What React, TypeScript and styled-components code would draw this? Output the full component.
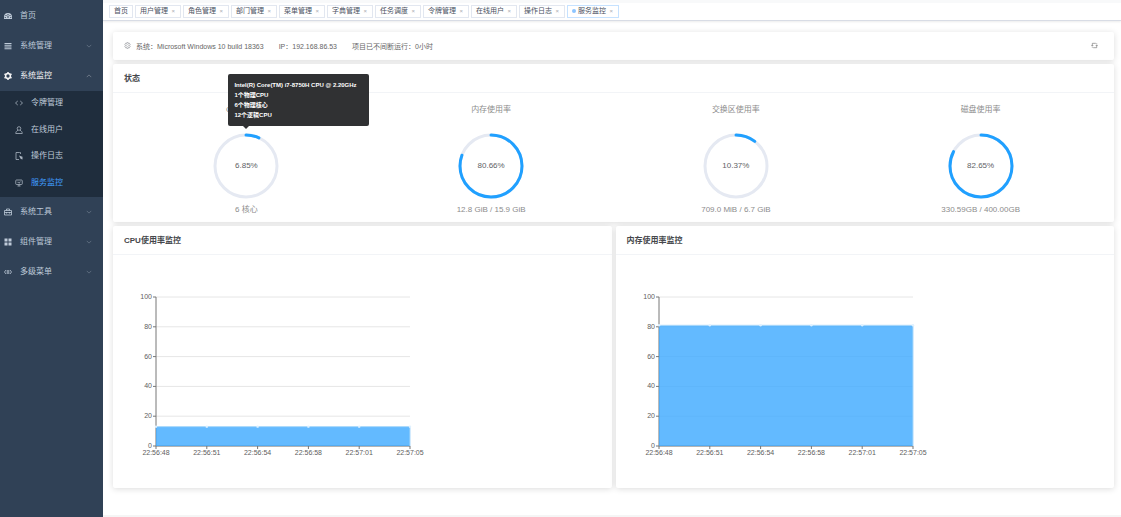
import React from 'react';
import styled, { createGlobalStyle, css } from 'styled-components';

const GlobalStyle = createGlobalStyle`
  *, *::before, *::after { box-sizing: border-box; }
  body {
    margin: 0;
    background: #fff;
    color: #303133;
    font-family: "Liberation Sans", "Noto Sans CJK SC", sans-serif;
    font-size: 7px;
  }
`;

const Layout = styled.div`
  display: flex;
  min-height: 100vh;
`;

/* ---------- Sidebar ---------- */

const Sidebar = styled.nav`
  flex: 0 0 103px;
  padding-top: 1px;
  background: #304156;
`;

const MenuLink = styled.a<{ $open?: boolean }>`
  display: flex;
  align-items: center;
  height: 30px;
  padding: 0 11px 0 4px;
  color: ${(p) => (p.$open ? '#f4f4f5' : '#bfcbd9')};
  font-size: 8px;
  line-height: 12px;
  text-decoration: none;

  span { flex: 1; margin-left: 8px; padding-bottom: 1px; }
`;

const SubMenu = styled.div`
  display: flex;
  flex-direction: column;
  min-height: 106px;
  background: #1f2d3d;
`;

const SubLink = styled.a<{ $active?: boolean }>`
  display: flex;
  flex: 1;
  align-items: center;
  gap: 8px;
  padding: 0 0 2px 15px;
  color: ${(p) => (p.$active ? '#409eff' : '#bfcbd9')};
  font-size: 8px;
  line-height: 12px;
  text-decoration: none;

  svg { color: #aab4c0; }
`;

const Icon = styled.svg.attrs({ viewBox: '0 0 16 16', 'aria-hidden': true })<{ $size?: number }>`
  flex: none;
  width: ${(p) => p.$size ?? 8}px;
  height: ${(p) => p.$size ?? 8}px;
  fill: none;
  stroke: currentColor;
  stroke-width: 1.6;
`;

const icons: Record<string, React.ReactNode> = {
  dashboard: (
    <path
      fill="currentColor"
      stroke="none"
      fillRule="evenodd"
      d="M8 2a8 8 0 0 0-8 8v4h16v-4a8 8 0 0 0-8-8zM7 4h2v2H7zM3 6h2v2H3zM11 6h2v2h-2zM1.500 10h2v2h-2zM12.500 10h2v2h-2zM7.300 7h1.400l.6 4.500H6.700z"
    />
  ),
  list: <path d="M1 3h14M1 6.500h14M1 10h14M1 13.500h14" strokeWidth="2" />,
  gear: (
    <>
      <circle cx="8" cy="8" r="4.800" strokeWidth="3" />
      <path d="M8 0v3M8 13v3M1 4l2.500 1.500M12.500 10.500L15 12M1 12l2.500-1.500M12.500 5.500L15 4" strokeWidth="3" />
    </>
  ),
  gearLine: (
    <>
      <path d="M6.300 1.500h3.400l.6 2 2-.6 1.800 3L12.700 8l1.400 2.100-1.800 3-2-.6-.6 2H6.300l-.6-2-2 .6-1.800-3L3.300 8 1.900 5.900l1.800-3 2 .6z" />
      <circle cx="8" cy="8" r="2.400" strokeWidth="1" />
    </>
  ),
  code: <path d="M5.500 4L1 8l4.500 4M10.500 4L15 8l-4.500 4" />,
  user: (
    <>
      <circle cx="8" cy="5" r="3.600" />
      <path d="M6 8.500C3 10 1.500 12 1.500 15h13c0-3-1.500-5-4.500-6.500" />
    </>
  ),
  log: (
    <>
      <path d="M9 1H2v14h6M9 1h2v3" />
      <path d="M8 7l7 2.500v5.500l-3-1-1.500-1.500z" fill="currentColor" stroke="none" />
    </>
  ),
  monitor: (
    <>
      <rect x="1.500" y="2" width="13" height="9" rx="1.500" />
      <path d="M5 14h6M8 11v3M5 6.500h2l1.500 2L10.500 5" />
    </>
  ),
  toolbox: <path d="M1 5h14v9H1zM5 5V2h6v3M1 9h14M5 8v3M11 8v3" />,
  grid: (
    <path fill="currentColor" stroke="none" d="M1 1h6v6H1zM9 1h6v6H9zM1 9h6v6H1zM9 9h6v6H9z" />
  ),
  nested: <path d="M4 4L1 8l3 4M12 4l3 4-3 4M6.500 4v8M9.500 4v8" />,
  down: <path d="M2 5l6 6 6-6" />,
  up: <path d="M2 11l6-6 6 6" />,
  refresh: <path d="M3 9V3h8M13 7v6H5M13 3v2M3 13v-2M1 7l2 2.500L5 7M11 9l2-2.500L15 9" />,
};

const mainTop = [
  { icon: 'dashboard', label: '首页' },
  { icon: 'list', label: '系统管理', arrow: 'down' },
  { icon: 'gear', label: '系统监控', arrow: 'up' },
];
const subItems = [
  { icon: 'code', label: '令牌管理' },
  { icon: 'user', label: '在线用户' },
  { icon: 'log', label: '操作日志' },
  { icon: 'monitor', label: '服务监控' },
];
const mainBottom = [
  { icon: 'toolbox', label: '系统工具', arrow: 'down' },
  { icon: 'grid', label: '组件管理', arrow: 'down' },
  { icon: 'nested', label: '多级菜单', arrow: 'down' },
];

const Faint = styled.i`
  display: flex;
  opacity: 0.5;
`;

function MenuRow({ icon, label, arrow }: { icon: string; label: string; arrow?: string }) {
  return (
    <MenuLink href="#" $open={arrow === 'up'}>
      <Icon>{icons[icon]}</Icon>
      <span>{label}</span>
      {arrow && (
        <Faint>
          <Icon $size={6}>{icons[arrow]}</Icon>
        </Faint>
      )}
    </MenuLink>
  );
}

/* ---------- Tabs ---------- */

const Main = styled.main`
  flex: 1;
  min-width: 0;
  border-bottom: 2px solid #f5f5f5;
`;

const TabBar = styled.div`
  display: flex;
  gap: 2px;
  height: 21px;
  padding: 2px 6px 0;
  border-top: 3px solid #f8f9fa;
  border-bottom: 1px solid #d8dce5;
  box-shadow: 0 1px 2px rgba(0, 0, 0, 0.08);
`;

const Tab = styled.div<{ $active?: boolean }>`
  display: flex;
  align-items: center;
  height: 13px;
  padding: 0 4px 2px;
  border: 1px solid ${(p) => (p.$active ? '#c6e2ff' : '#e2e7f0')};
  line-height: 9px;
  white-space: nowrap;

  ${(p) =>
    p.$active &&
    css`
      &::before {
        content: '';
        width: 4px;
        height: 4px;
        margin-right: 2px;
        border-radius: 50%;
        background: #8cc5ff;
      }
    `}
`;

const TabLink = styled.a`
  color: #495060;
  font-size: 7px;
  text-decoration: none;
`;

const CloseButton = styled.button`
  width: 8px;
  padding: 0 1px 0 0;
  border: 0;
  background: none;
  color: #a8abb2;
  font-size: 6px;
  line-height: 8px;
  text-align: right;
`;

const tabs = ['首页', '用户管理', '角色管理', '部门管理', '菜单管理', '字典管理', '任务调度', '令牌管理', '在线用户', '操作日志', '服务监控'];

/* ---------- Cards ---------- */

const Content = styled.div`
  display: flex;
  flex-direction: column;
  gap: 4px;
  padding: 11px 7px 27px 10px;
`;

const Card = styled.section`
  border-radius: 2px;
  background: #fff;
  box-shadow: 0 1px 6px rgba(0, 0, 0, 0.14);
`;

const InfoBar = styled(Card)`
  display: flex;
  align-items: center;
  gap: 15px;
  height: 28px;
  padding: 0 16px 1px 11px;
  color: #666;
`;

const System = styled.span`
  display: flex;
  align-items: center;
  gap: 5px;

  svg { color: #909399; }
`;

const RefreshButton = styled.button`
  display: flex;
  margin-left: auto;
  padding: 0;
  border: 0;
  background: none;
  color: #808080;
`;

const CardTitle = styled.h2`
  margin: 0;
  padding: 2px 11px 0;
  border-bottom: 1px solid #f2f4f7;
  color: #45474b;
  font-size: 8px;
  font-weight: 700;
  line-height: 26px;
`;

const Gauges = styled.div`
  display: grid;
  grid-template-columns: repeat(4, 1fr);
  padding: 11px 11px 6px;
`;

const Gauge = styled.div`
  position: relative;
  display: flex;
  flex-direction: column;
  align-items: center;
  color: #8c8c8c;
  font-size: 8px;
  line-height: 12px;
`;

const Ring = styled.div`
  display: grid;
  margin: 17px 0 5px;
  place-items: center;

  > * { grid-area: 1 / 1; }
`;

const Percent = styled.span`
  color: #606266;
`;

const Tooltip = styled.div`
  position: absolute;
  bottom: 90px;
  left: 50%;
  width: 141px;
  margin-left: -18px;
  padding: 6px;
  border-radius: 2px;
  background: #303133;
  color: #fff;
  font-size: 6px;
  font-weight: 700;
  line-height: 10px;
  white-space: nowrap;

  &::after {
    content: '';
    position: absolute;
    top: 100%;
    left: 15px;
    border: 3px solid transparent;
    border-top-color: #303133;
    border-bottom: 0;
  }
`;

const gauges = [
  { title: 'CPU使用率', value: 6.85, text: '6.85%', note: '6 核心', tip: ['Intel(R) Core(TM) i7-8750H CPU @ 2.20GHz', '1个物理CPU', '6个物理核心', '12个逻辑CPU'] },
  { title: '内存使用率', value: 80.66, text: '80.66%', note: '12.8 GiB / 15.9 GiB' },
  { title: '交换区使用率', value: 10.37, text: '10.37%', note: '709.0 MiB / 6.7 GiB' },
  { title: '磁盘使用率', value: 82.65, text: '82.65%', note: '330.59GB / 400.00GB' },
];

function RingChart({ value }: { value: number }) {
  return (
    <svg width="66" height="66" viewBox="0 0 66 66" fill="none" strokeWidth="3">
      <circle cx="33" cy="33" r="31" stroke="#e5e9f2" />
      <circle
        cx="33"
        cy="33"
        r="31"
        stroke="#20a0ff"
        strokeLinecap="round"
        pathLength="100"
        strokeDasharray={`${value} 100`}
        transform="rotate(-90 33 33)"
      />
    </svg>
  );
}

const Charts = styled.div`
  display: grid;
  grid-template-columns: 1fr 1fr;
  gap: 4px;
`;

const ChartBody = styled.div`
  padding: 27px 11px 17px;

  svg { display: block; overflow: visible; }
  text { fill: #606060; font-size: 7px; }
`;

const times = ['22:56:48', '22:56:51', '22:56:54', '22:56:58', '22:57:01', '22:57:05'];

function AreaChart({ value }: { value: number }) {
  const left = 32;
  const right = 286;
  const base = 164;
  const height = 149;
  const step = (right - left) / 5;
  const y = (v: number) => base - (v / 100) * height;
  return (
    <svg width="320" height="189" viewBox="0 0 320 189">
      {[0, 20, 40, 60, 80, 100].map((v) => (
        <g key={v}>
          <path d={`M${left} ${y(v)}H${right}`} stroke="#e6e6e6" />
          <path d={`M${left - 3} ${y(v)}h3`} stroke="#777" />
          <text x={left - 4} y={y(v) + 2} textAnchor="end">{v}</text>
        </g>
      ))}
      <path d={`M${left} ${y(100)}V${base}H${right}`} fill="none" stroke="#777" />
      <rect x={left} y={y(value)} width={right - left} height={base - y(value)} fill="#3ca9ff" fillOpacity="0.8" />
      <path d={`M${left} ${y(value)}H${right}V${base}`} fill="none" stroke="#a9d8fb" />
      {times.map((t, i) => (
        <g key={t}>
          <path d={`M${left + step * i} ${base}v3`} stroke="#777" />
          <circle cx={left + step * i} cy={y(value)} r="1.200" fill="#dff1ff" />
          <text x={left + step * i} y={base + 9} textAnchor="middle">{t}</text>
        </g>
      ))}
    </svg>
  );
}

export default function App() {
  return (
    <>
      <GlobalStyle />
      <Layout>
        <Sidebar>
          {mainTop.map((m) => <MenuRow key={m.label} {...m} />)}
          <SubMenu>
            {subItems.map((s) => (
              <SubLink key={s.label} href="#" $active={s.icon === 'monitor'}>
                <Icon>{icons[s.icon]}</Icon>
                {s.label}
              </SubLink>
            ))}
          </SubMenu>
          {mainBottom.map((m) => <MenuRow key={m.label} {...m} />)}
        </Sidebar>
        <Main>
          <TabBar>
            {tabs.map((t, i) => (
              <Tab key={t} $active={i === tabs.length - 1}>
                <TabLink href="#">{t}</TabLink>
                {i > 0 && <CloseButton aria-label={`关闭${t}`}>×</CloseButton>}
              </Tab>
            ))}
          </TabBar>
          <Content>
            <InfoBar>
              <System>
                <Icon $size={7}>{icons.gearLine}</Icon>
                系统：Microsoft Windows 10 build 18363
              </System>
              <span>IP：192.168.86.53</span>
              <span>项目已不间断运行：0小时</span>
              <RefreshButton aria-label="刷新">
                <Icon $size={7}>{icons.refresh}</Icon>
              </RefreshButton>
            </InfoBar>
            <Card>
              <CardTitle>状态</CardTitle>
              <Gauges>
                {gauges.map((g) => (
                  <Gauge key={g.title}>
                    <span>{g.title}</span>
                    <Ring>
                      <RingChart value={g.value} />
                      <Percent>{g.text}</Percent>
                    </Ring>
                    <span>{g.note}</span>
                    {g.tip && (
                      <Tooltip role="tooltip">
                        {g.tip.map((line) => <div key={line}>{line}</div>)}
                      </Tooltip>
                    )}
                  </Gauge>
                ))}
              </Gauges>
            </Card>
            <Charts>
              <Card>
                <CardTitle>CPU使用率监控</CardTitle>
                <ChartBody><AreaChart value={13} /></ChartBody>
              </Card>
              <Card>
                <CardTitle>内存使用率监控</CardTitle>
                <ChartBody><AreaChart value={81} /></ChartBody>
              </Card>
            </Charts>
          </Content>
        </Main>
      </Layout>
    </>
  );
}
